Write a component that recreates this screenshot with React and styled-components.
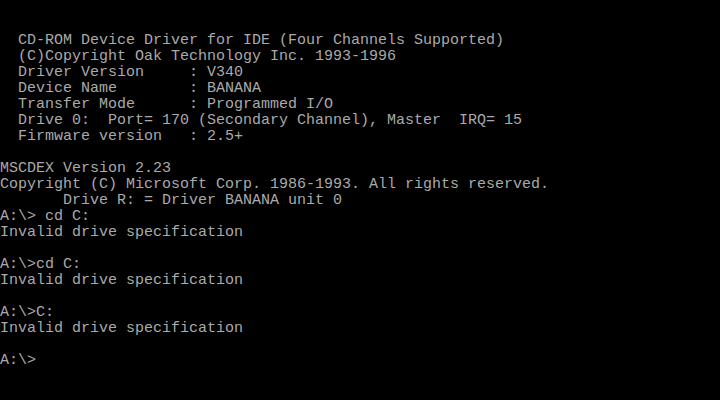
import React from 'react';
import styled, { createGlobalStyle } from "styled-components"

const GlobalStyle = createGlobalStyle`
html,body{
    margin:0;
    padding:0;
    background:#000;
}
`

const lines = [
    "",
    "",
    "  CD-ROM Device Driver for IDE (Four Channels Supported)",
    "  (C)Copyright Oak Technology Inc. 1993-1996",
    "  Driver Version     : V340",
    "  Device Name        : BANANA",
    "  Transfer Mode      : Programmed I/O",
    "  Drive 0:  Port= 170 (Secondary Channel), Master  IRQ= 15",
    "  Firmware version   : 2.5+",
    "",
    "MSCDEX Version 2.23",
    "Copyright (C) Microsoft Corp. 1986-1993. All rights reserved.",
    "       Drive R: = Driver BANANA unit 0",
    "A:\\> cd C:",
    "Invalid drive specification",
    "",
    "A:\\>cd C:",
    "Invalid drive specification",
    "",
    "A:\\>C:",
    "Invalid drive specification",
    "",
    "A:\\>",
]

function App() {
    return (
        <>
            <GlobalStyle />
            <Screen>
                {lines.map((line, index) => <Line key={index}>{line || " "}</Line>)}
            </Screen>
        </>
    )
}

export default App

const Screen = styled.div`
width:720px;
height:400px;
background:#000;
overflow:hidden;
display:flex;
flex-direction:column;
`

const Line = styled.div`
box-sizing:border-box;
height:16px;
padding-top:1px;
line-height:16px;
white-space:pre;
font-family:"Liberation Mono", "DejaVu Sans Mono", monospace;
font-size:15px;
color:#aaaaaa;
`
